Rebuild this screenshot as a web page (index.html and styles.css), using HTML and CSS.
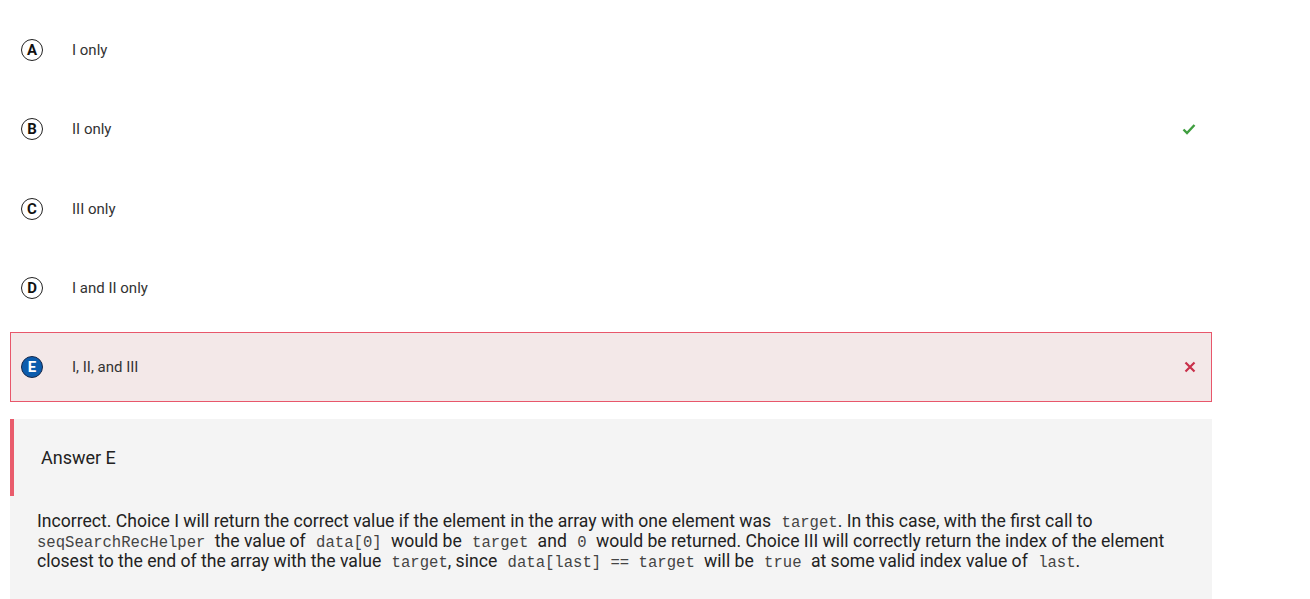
FILE: index.html
```html
<!DOCTYPE html>
<html>
<head>
<meta charset="utf-8">
<link rel="stylesheet" href="styles.css">
</head>
<body>
<div class="page">
  <div class="options">
    <div class="option">
      <span class="letter">A</span><span class="label">I only</span>
    </div>
    <div class="option">
      <span class="letter">B</span><span class="label">II only</span>
      <svg class="mark" width="14" height="12" viewBox="0 0 14 12"><path d="M1.5 6.5 L5 10 L12.5 2" fill="none" stroke="#3f9e3f" stroke-width="2.4"/></svg>
    </div>
    <div class="option">
      <span class="letter">C</span><span class="label">III only</span>
    </div>
    <div class="option">
      <span class="letter">D</span><span class="label">I and II only</span>
    </div>
    <div class="option selected">
      <span class="letter filled">E</span><span class="label">I, II, and III</span>
      <svg class="mark" width="12" height="12" viewBox="0 0 12 12"><path d="M1.5 1.5 L10.5 10.5 M10.5 1.5 L1.5 10.5" fill="none" stroke="#c9304a" stroke-width="2.2"/></svg>
    </div>
  </div>
  <div class="answer">
    <div class="answer-head">Answer E</div>
    <div class="answer-body">Incorrect. Choice I will return the correct value if the element in the array with one element was <code>target</code>. In this case, with the first call to <code class="sp first">seqSearchRecHelper</code> the value of <code class="sp">data[0]</code> would be <code class="sp">target</code> and <code class="sp">0</code> would be returned. Choice III will correctly return the index of the element closest to the end of the array with the value <code>target</code>, since <code class="sp">data[last] == target</code> will be <code class="sp">true</code> at some valid index value of <code>last</code>.</div>
  </div>
</div>
</body>
</html>
```
FILE: styles.css
```css
html, body {
  margin: 0;
  padding: 0;
  background: #ffffff;
}
.page {
  width: 1202px;
  padding: 15px 0 0 10px;
  font-family: Roboto, "Liberation Sans", sans-serif;
  color: #333333;
}
.options {
  display: flex;
  flex-direction: column;
  gap: 9.25px;
}
.option {
  height: 70px;
  box-sizing: border-box;
  border: 1px solid transparent;
  display: flex;
  align-items: center;
  padding-left: 10px;
  padding-right: 15px;
}
.option.selected {
  background: #f3e8e8;
  border-color: #e8576b;
}
.letter {
  width: 22px;
  height: 22px;
  box-sizing: border-box;
  border: 1.5px solid #222;
  border-radius: 50%;
  display: flex;
  align-items: center;
  justify-content: center;
  font-family: Roboto, "Liberation Sans", sans-serif;
  font-weight: 700;
  font-size: 15px;
  color: #111;
}
.letter.filled {
  background: #0b5cad;
  border-color: #16284a;
  color: #ffffff;
}
.label {
  margin-left: 29px;
  font-size: 15px;
  color: #333;
  flex: 1;
}
.mark {
  display: block;
}
.answer {
  margin-top: 17px;
  background: #f4f4f4;
  padding-bottom: 30px;
}
.answer-head {
  height: 77px;
  box-sizing: border-box;
  border-left: 4px solid #e95c6c;
  display: flex;
  align-items: center;
  padding-left: 27px;
  font-size: 18px;
  color: #222;
}
.answer-body {
  padding: 15px 27px 0 27px;
  font-size: 17.6px;
  line-height: 20px;
  color: #222;
}
code {
  font-family: "Liberation Mono", "DejaVu Sans Mono", monospace;
  font-size: 15.6px;
  line-height: 0;
  color: #444;
  padding-left: 6px;
}
code.sp {
  padding-right: 5px;
}
code.first {
  padding-left: 0;
}
```
